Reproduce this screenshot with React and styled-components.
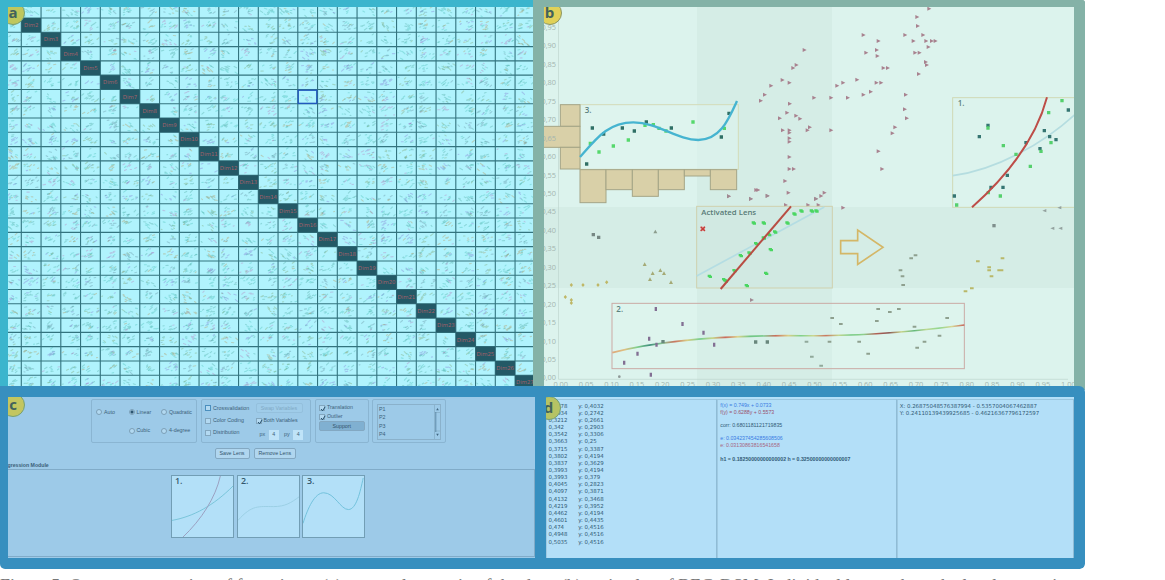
import React from "react";
import styled, { createGlobalStyle } from "styled-components";

const GlobalStyle = createGlobalStyle`
  * { box-sizing: border-box; }
  body { margin: 0; background: #fff; overflow: hidden; font-family: "Liberation Sans", Arial, sans-serif; }
`;

const Page = styled.div`
  width: 1165px;
  height: 580px;
  overflow: hidden;
`;
const Figure = styled.main`
  width: 1085px;
  display: grid;
  grid-template-columns: 533px 552px;
  grid-template-rows: 386px 183px;
  background: linear-gradient(#84b2a7 0 390px, #fff 390px);
  border-radius: 0 3px 5px 5px;
  overflow: hidden;
`;
const Panel = styled.section`
  background: ${(p) => p.$frame};
  padding: ${(p) => p.$pad};
`;
const View = styled.div`
  position: relative;
  height: 100%;
  overflow: hidden;
  background: ${(p) => p.$bg};
`;
const Chart = styled.svg`
  display: block;
  width: 100%;
  height: 100%;
`;
const Badge = styled.span`
  position: absolute;
  left: ${(p) => p.$x}px;
  top: ${(p) => p.$y}px;
  width: 24px;
  height: 24px;
  border-radius: 50%;
  border: 1px solid ${(p) => p.$edge || "#76a075"};
  background: ${(p) => p.$bg};
  color: #42625c;
  font: 700 15px/21px "Open Sans", sans-serif;
  text-align: center;
`;
const Bottom = styled.section`
  grid-column: 1 / -1;
  display: grid;
  grid-template-columns: 527px 528px;
  gap: 11px;
  padding: 11px 11px 11px 8px;
  background: #378fbf;
  border-radius: 0 6px 5px 2px;
`;

/* ---------- controls ---------- */
const Controls = styled.div`
  height: 100%;
  display: flex;
  flex-direction: column;
  padding-top: 1.5px;
  font-size: 5.3px;
  line-height: 7px;
  color: #3b5f78;
`;
const GroupRow = styled.div`
  display: flex;
  padding-left: 83px;
  height: 44px;
`;
const Group = styled.fieldset`
  margin: 0 ${(p) => p.$gap || 0}px 0 0;
  min-width: 0;
  width: ${(p) => p.$w}px;
  padding: ${(p) => p.$pad};
  border: 1px solid #8ab5d2;
  border-radius: 2px;
  display: ${(p) => (p.$cols ? "grid" : "block")};
  grid-template-columns: ${(p) => p.$cols};
  grid-auto-rows: ${(p) => p.$rows}px;
  align-items: center;
`;
const Option = styled.label`
  display: flex;
  align-items: center;
  gap: 2px;
  height: ${(p) => p.$h || 7}px;
  grid-column: ${(p) => p.$col || "auto"};
  white-space: nowrap;
`;
const Radio = styled.i`
  width: 6px;
  height: 6px;
  border-radius: 50%;
  border: 0.8px solid #7c9fb7;
  background: ${(p) => (p.$on ? "radial-gradient(#2b546f 0 1.2px, #a9d1eb 1.9px)" : "#b2d9f1")};
`;
const Check = styled.i`
  width: 6px;
  height: 6px;
  border: 1px solid ${(p) => (p.$focus ? "#4b8fbe" : "#83a7bf")};
  background: #b3d9f1;
  display: grid;
  place-items: center;
`;
const Tick = () => (
  <svg width="6" height="6" viewBox="0 0 6 6">
    <path d="M1 3L2.5 4.8L5.2 .8" fill="none" stroke="#244d69" strokeWidth="1" />
  </svg>
);
const Button = styled.button`
  width: ${(p) => p.$w}px;
  height: ${(p) => p.$h || 10.5}px;
  padding: 0;
  font: inherit;
  line-height: 8px;
  color: ${(p) => (p.disabled ? "#80a9c5" : "#32546c")};
  border: 1px solid ${(p) => (p.disabled ? "#94c0dd" : "#83a8c2")};
  border-radius: 2px;
  background: ${(p) => (p.$pressed ? "#80b0d1" : p.disabled ? "#9fcce9" : "#b0d6ef")};
`;
const AxisPick = styled.div`
  display: flex;
  align-items: center;
  gap: 5.5px;
  padding: 4px 0 0 4px;
`;
const Field = styled.b`
  width: 10px;
  height: 9.5px;
  font-weight: 400;
  text-align: center;
  line-height: 9px;
  background: #bfe3f8;
  margin-left: -2px;
`;
const ListBox = styled.div`
  width: 64px;
  height: 36px;
  border: 1px solid #8ab1cb;
  display: flex;
  justify-content: space-between;
  padding-left: 1.5px;
  line-height: 8.5px;
`;
const Scroll = styled.svg`
  width: 6px;
  height: 34px;
`;
const ButtonRow = styled.div`
  display: flex;
  gap: 4px;
  padding: 5.5px 0 0 206.5px;
  height: 20px;
`;
const ModuleTitle = styled.div`
  height: 6px;
  line-height: 5px;
  font-weight: 700;
  font-size: 5.2px;
  margin-left: -0.5px;
`;
const Models = styled.div`
  flex: 1;
  display: flex;
  gap: 2.4px;
  padding: 5.5px 0 0 163px;
  margin-bottom: 1px;
  border: 1px solid #80abc8;
  border-left: 0;
`;
const Thumb = styled.svg`
  width: 63.2px;
  height: 63.2px;
  background: #b3e0f8;
  border: 1px solid #729eb5;
  font: 600 9px "Open Sans", sans-serif;
`;

/* ---------- data readout ---------- */
const Readout = styled.div`
  display: grid;
  grid-template-columns: 170.5px 180px 1fr;
  height: 100%;
  padding-top: 2px;
`;
const Column = styled.div`
  padding: ${(p) => p.$pad};
  border-top: 1px solid #9ac6df;
  border-right: 1px solid #8fbcd6;
  box-shadow: inset 1px 0 #a0cae2;
  font: ${(p) => (p.$verdana ? '5.45px/7.16px "DejaVu Sans"' : '5.22px/6.7px "Liberation Sans"')}, sans-serif;
  color: #315a75;
`;
const Pair = styled.div`
  display: grid;
  grid-template-columns: 29.7px 1fr;
`;
const Line = styled.div`
  height: 6.7px;
  white-space: nowrap;
  color: ${(p) => p.$tone || "inherit"};
  font-weight: ${(p) => (p.$bold ? 700 : 400)};
`;
const Caption = styled.p`
  margin: 7px 0 0;
  font: 17.9px/20px "Liberation Serif", serif;
  color: #777;
  white-space: nowrap;
`;

/* ---------- scatterplot matrix ---------- */
const PX = 19.75, PY = 14.29, X0 = 21.3, Y0 = 18;
const INKS = ["#44bdb5", "#4ba79f", "#5f8b9c", "#7f78cf", "#b58f50", "#b87bbb", "#7aa06a"];

function matrixStrokes() {
  let s = 91;
  const rnd = () => ((s = (s * 16807) % 2147483647) / 2147483647);
  const paths = INKS.map(() => "");
  for (let r = -1; r < 26; r++) {
    for (let c = -1; c < 26; c++) {
      if (r === c) continue;
      const accent = Math.floor(rnd() * INKS.length);
      const cx = 0.3 + ((c * 7 + 30) % 5) * 0.11;
      const cy = 0.35 + ((r * 5 + 30) % 4) * 0.12;
      const n = (r === c + 1 ? 4 : 7) + Math.floor(rnd() * 7);
      const dir = rnd() < 0.75 ? -1 : 1;
      for (let i = 0; i < n; i++) {
        const k = rnd() < 0.45 ? accent : rnd() < 0.6 ? Math.floor(rnd() * 2) : Math.floor(rnd() * INKS.length);
        const u = rnd() < 0.55 ? cx + (rnd() - 0.5) * 0.45 : rnd();
        const v = rnd() < 0.55 ? cy + (rnd() - 0.5) * 0.5 : rnd();
        const x = X0 + (c + 0.06 + 0.8 * Math.min(1, Math.max(0, u))) * PX;
        const y = Y0 + (r + 0.16 + 0.72 * Math.min(1, Math.max(0, v))) * PY;
        const l = 0.8 + rnd() * 1.8;
        paths[k] += `M${x.toFixed(1)} ${y.toFixed(1)}l${l.toFixed(1)} ${(dir * l * rnd()).toFixed(1)}`;
      }
    }
  }
  return paths;
}
const STROKES = matrixStrokes();
const STEPS = Array.from({ length: 26 }, (_, i) => i);

const Matrix = () => (
  <Chart viewBox="8 7 525 379">
    {STROKES.map((d, i) => (
      <path key={i} d={d} stroke={INKS[i]} strokeWidth="1.1" strokeLinecap="round" opacity="0.36" fill="none" />
    ))}
    <g stroke="#33747f" strokeWidth="1.1">
      {STEPS.map((i) => (
        <path key={i} d={`M${X0 + i * PX} 7V386M8 ${Y0 + i * PY}H533`} />
      ))}
    </g>
    {STEPS.map((i) => (
      <g key={i}>
        <rect x={X0 + i * PX} y={Y0 + i * PY} width={PX} height={PY} fill="#235966" />
        <text x={X0 + (i + 0.5) * PX} y={Y0 + (i + 0.5) * PY + 2} textAnchor="middle" fontSize="5.4" fontFamily="DejaVu Sans" fill="#a0606a">
          {`Dim${i + 2}`}
        </text>
      </g>
    ))}
    <rect x="298.2" y="90.2" width="18.6" height="13.2" fill="none" stroke="#2158bd" strokeWidth="1.4" />
  </Chart>
);

/* ---------- regression plot: each Frame is a local grid, three units per pixel ---------- */
const Frame = ({ x, y, children }) => <g transform={`translate(${x} ${y}) scale(.33333)`}>{children}</g>;
const Marks = ({ pts, shape, fill }) => (
  <path fill={fill} d={pts.map(([x, y]) => `M${x} ${y}${shape}`).join("")} />
);
const RIGHT = "m-5 -6l12 6l-12 6z";
const LEFT = "m6 -5v10l-12 -5z";
const UP = "m-6 5l6 -11l6 11z";
const DOT = "m-5 -5h10v10h-10z";
const DASH = "m-6 -3h11v6h-11z";
const PILL = "m-4 -6h7v12h-7z";

const TRI_A = [[808,150],[784,195],[774,204],[742,240],[763,248],[708,257],[689,284],[677,302],[837,293],[764,311],[756,338],[783,347],[795,356],[734,355],[743,391],[763,391],[763,398],[824,382],[817,391],[763,415],[763,425],[763,471],[763,507],[776,507],[750,543],[760,578],[663,570],[669,570],[697,588],[647,597],[581,589],[752,615],[819,615]];
const TRI_B = [[357,26],[321,51],[323,78],[160,105],[285,105],[339,105],[205,123],[310,123],[348,123],[365,123],[376,123],[355,141],[200,150],[168,158],[202,168],[315,158],[328,158],[347,186],[350,195],[220,204],[233,204],[326,222],[141,239],[99,248],[81,257],[199,248],[213,248],[182,275],[160,284],[287,284],[63,293],[113,293],[284,328],[290,355],[255,382],[247,400],[63,391],[205,454],[216,507],[43,578],[33,588],[17,597],[25,615],[99,623]];
const BARS = [[76,314,59,65],[24,379,111,63],[76,442,59,65],[135,509,78,99],[213,509,79,60],[292,509,78,80],[370,509,78,60],[448,509,78,19],[526,509,79,60]];
const TREND = ["#dda77b","#dfbf80","#7fcf8c","#3f8f7c","#8cc796","#c97560","#d9ce85","#76cf90","#c8d58a","#c96a5e","#ddd48c","#70c684","#7fcc90","#c96e5c","#dccf87","#7ed18b","#cbd78f","#c9765f","#c4d68e","#77cb84","#8fd08d","#b36156","#8a5450","#c9d58c","#60b779","#bfd993","#8fd68e","#d8d794","#c66358"];

const Regression = () => (
  <Chart viewBox="544 7 530 379" fontFamily="Open Sans, sans-serif">
    <defs>
      <linearGradient id="trend" gradientUnits="userSpaceOnUse" x1="231" y1="0" x2="1288" y2="0">
        {TREND.map((c, i) => (
          <stop key={i} offset={i / (TREND.length - 1)} stopColor={c} />
        ))}
      </linearGradient>
    </defs>
    <path d="M697 7H832V386H697zM544 207H1074V288H544z" fill="#b8d7cf" opacity="0.2" />
    <path d="M558.5 20V379.3H1068" fill="none" stroke="#bfd5cf" strokeWidth="0.7" />
    <Frame x={535} y={0}>
      <rect x="135" y="314" width="475" height="194" fill="#dff6f0" fillOpacity=".5" stroke="#d3dcb9" strokeWidth="3" />
      {BARS.map(([x, y, w, h]) => (
        <rect key={`${x}-${y}`} x={x} y={y} width={w} height={h} fill="#d9d0a8" stroke="#a5a586" strokeWidth="3" />
      ))}
      <Marks pts={TRI_A} shape={RIGHT} fill="#a8828f" />
      <Marks pts={[[172,384],[206,402],[262,384],[298,393],[334,366],[409,384],[559,411],[582,340],[155,492]]} shape={DOT} fill="#2f6f65" />
      <Marks pts={[[166,430],[192,456],[235,438],[280,420],[330,376],[355,374],[372,385],[393,393],[474,366],[568,385]]} shape={DOT} fill="#55d86c" />
      <path d="M135 471C185 414 220 367 295 367S425 420 490 420C555 420 580 360 606 303" fill="none" stroke="#46b4d0" strokeWidth="7" />
      <text x="149" y="339" fontSize="24" fontWeight="600" fill="#5c817d">3.</text>
    </Frame>
    <Frame x={810} y={0}>
      <Marks pts={TRI_B} shape={RIGHT} fill="#a8828f" />
      <rect x="428" y="293" width="366" height="329" fill="none" stroke="#d0d9b5" strokeWidth="3" />
      <path d="M428 527C560 510 700 430 794 344" fill="none" stroke="#b5dde0" strokeWidth="5" />
      <Marks pts={[[534,376],[508,410],[775,330],[703,392],[719,410],[738,419],[690,446],[648,428],[592,526],[543,562],[579,562],[433,588]]} shape={DOT} fill="#357572" />
      <Marks pts={[[534,384],[580,437],[618,463],[661,499],[693,454],[723,428],[716,338],[756,302],[571,588],[535,578],[440,615]]} shape={DOT} fill="#55d06d" />
      <path d="M486 622C600 520 680 410 711 292" fill="none" stroke="#bd4d48" strokeWidth="6" />
      <text x="443" y="319" fontSize="24" fontWeight="600" fill="#5c817d">1.</text>
    </Frame>
    <Frame x={535} y={195}>
      <rect x="485" y="34" width="407" height="245" fill="#bdd8d0" fillOpacity=".15" stroke="#cfd1ae" strokeWidth="3" />
      <path d="M485 243L868 36" stroke="#b4dde3" strokeWidth="5" />
      <Marks pts={[[656,84],[686,84],[757,84],[720,111],[702,119],[686,129],[663,146],[643,174],[617,182],[707,164],[693,235],[635,272],[524,244],[567,254],[598,227],[778,57],[799,48],[830,48],[844,48],[572,258]]} shape="m-6 -5h10v3h3v7h-10v-3h-3z" fill="#4ad661" />
      <path d="M557 282L768 34" stroke="#b84d43" strokeWidth="6" />
      <path d="M497 95h13v13h-13z" fill="#f0a19b" />
      <path d="M497 95l13 13m0 -13l-13 13" stroke="#bf3f3c" strokeWidth="4" />
      <text x="499" y="61" fontSize="23.4" fontWeight="600" fill="#587b77">Activated Lens</text>
      <Marks pts={[[581,4],[647,11],[697,2],[650,315],[843,11]]} shape={RIGHT} fill="#a08a93" />
      <Marks pts={[[175,119],[191,127]]} shape={DOT} fill="#768783" />
      <Marks pts={[[361,110]]} shape={UP} fill="#8c9d8d" />
      <Marks pts={[[329,208],[353,235],[345,253],[376,226],[387,235],[408,262]]} shape={UP} fill="#a5aa76" />
      <Marks pts={[[109,270],[144,270],[189,270],[215,262],[91,306],[109,315],[109,324]]} shape="m0 -6l5 6l-5 6l-5 -6z" fill="#bfb766" />
      <rect x="231" y="325" width="1057" height="196" fill="#e0f6f1" fillOpacity=".25" stroke="#cbaaa5" strokeWidth="3" />
      <path d="M232 473C400 430 600 423 750 422C950 424 1100 415 1288 390" fill="none" stroke="url(#trend)" strokeWidth="5" />
      <Marks pts={[[363,342],[443,387],[506,413],[538,449],[343,431],[365,449],[308,476],[268,503],[348,539]]} shape={PILL} fill="#826f93" />
      <Marks pts={[[384,440],[662,441],[697,441]]} shape={DOT} fill="#69877c" />
      <Marks pts={[[815,440],[831,485],[859,512]]} shape={DASH} fill="#91a99b" />
      <circle cx="253" cy="545" r="4" fill="#8f9998" />
      <text x="244" y="352" fontSize="24" fontWeight="600" fill="#5c817d">2.</text>
    </Frame>
    <Frame x={810} y={195}>
      <path d="M92 137H143V105L219 157L143 208V176H92z" fill="none" stroke="#d4b767" strokeWidth="5" />
      <Marks pts={[[205,342],[240,351],[267,342],[67,369],[93,387],[201,378],[412,369],[314,395],[389,422],[344,440],[322,458],[59,440],[148,440],[175,476],[304,190],[317,181],[272,226],[278,244],[280,270]]} shape={DASH} fill="#8ea08f" />
      <Marks pts={[[504,199],[578,190],[538,217],[538,226],[568,226],[575,226],[545,244],[486,280],[467,289]]} shape={DASH} fill="#b9b869" />
      <Marks pts={[[703,47],[748,38],[727,100],[751,100]]} shape={LEFT} fill="#94a29f" />
      <Marks pts={[[552,92]]} shape={DOT} fill="#7f8f8c" />
    </Frame>
    <g fill="#a3b5af" fontSize="7.4">
      {Array.from({ length: 20 }, (_, i) => (
        <text key={i} x="556" y={380.4 - i * 18.44} textAnchor="end">{(i * 0.05).toFixed(2).replace(".", ",")}</text>
      ))}
      {Array.from({ length: 21 }, (_, i) => (
        <text key={i} x={560.7 + i * 25.38} y="387.3" textAnchor="middle">{(i * 0.05).toFixed(2)}</text>
      ))}
    </g>
  </Chart>
);

const POINTS = [
  ["0,2778","0,4032"],["0,2934","0,2742"],["0,3212","0,2661"],["0,342","0,2903"],["0,3542","0,3306"],
  ["0,3663","0,25"],["0,3715","0,3387"],["0,3802","0,4194"],["0,3837","0,3629"],["0,3993","0,4194"],
  ["0,3993","0,379"],["0,4045","0,2823"],["0,4097","0,3871"],["0,4132","0,3468"],["0,4219","0,3952"],
  ["0,4462","0,4194"],["0,4601","0,4435"],["0,474","0,4516"],["0,4948","0,4516"],["0,5035","0,4516"],
];

const ControlPanel = () => (
  <Controls>
    <GroupRow>
      <Group $w={106} $gap={4} $pad="3.5px 0 0 4px" $cols="32.5px 32.5px 1fr" $rows={18.5}>
        <Option><Radio />Auto</Option>
        <Option><Radio $on />Linear</Option>
        <Option><Radio />Quadratic</Option>
        <Option $col="2"><Radio />Cubic</Option>
        <Option><Radio />4-degree</Option>
      </Group>
      <Group $w={109.5} $gap={4} $pad="2.5px 0 0 3px" $cols="50.5px 1fr" $rows={12.4}>
        <Option><Check $focus />Crossvalidation</Option>
        <Button $w={47} disabled>Swap Variables</Button>
        <Option><Check />Color Coding</Option>
        <Option><Check><Tick /></Check>Both Variables</Option>
        <Option><Check />Distribution</Option>
        <AxisPick>px<Field>4</Field>py<Field>4</Field></AxisPick>
      </Group>
      <Group $w={54} $gap={3} $pad="3.5px 0 0 3.5px">
        <Option $h={9.2}><Check><Tick /></Check>Translation</Option>
        <Option $h={9.2}><Check><Tick /></Check>Outlier</Option>
        <Button $w={45.5} $h={9.5} $pressed>Support</Button>
      </Group>
      <Group $w={74.5} $pad="4px 0 0 4px">
        <ListBox>
          <div>{["P1", "P2", "P3", "P4"].map((p) => <div key={p}>{p}</div>)}</div>
          <Scroll viewBox="0 0 6 34">
            <path d="M.5 0V34M.5 7.5H6M.5 26H6" stroke="#85aec8" strokeWidth=".8" />
            <path d="M1.8 7V27" stroke="#5e8ba8" />
            <path d="M3.5 3l1.3 2.3h-2.6zM3.5 31l1.3 -2.3h-2.6z" fill="#3f6580" />
          </Scroll>
        </ListBox>
      </Group>
    </GroupRow>
    <ButtonRow>
      <Button $w={35}>Save Lens</Button>
      <Button $w={42.5}>Remove Lens</Button>
    </ButtonRow>
    <ModuleTitle>gression Module</ModuleTitle>
    <Models>
      <Thumb viewBox="0 0 62 62">
        <path d="M0 45C22 41 42 30 62 10" fill="none" stroke="#79c4d9" />
        <path d="M11 62C30 44 44 22 49 0" fill="none" stroke="#9a9fc0" />
        <text x="3" y="8.5" fill="#34576c">1.</text>
      </Thumb>
      <Thumb viewBox="0 0 62 62">
        <path d="M0 45C14 29 21 31 36 31C48 31 54 27 62 21" fill="none" stroke="#9bcfe5" />
        <text x="3" y="8.5" fill="#34576c">2.</text>
      </Thumb>
      <Thumb viewBox="0 0 62 62">
        <path d="M0 48C5 32 12 17 21 17C32 17 38 34 46 34C54 34 58 16 61 2" fill="none" stroke="#72c1db" />
        <text x="4" y="8.5" fill="#34576c">3.</text>
      </Thumb>
    </Models>
  </Controls>
);

export default function App() {
  return (
    <Page>
      <GlobalStyle />
      <Figure>
        <Panel $frame="#3bb5cd" $pad="7px 0 0 8px">
          <View $bg="#b0f3fd">
            <Matrix />
            <Badge $x={-7} $y={-6} $bg="#bfc75d">a</Badge>
          </View>
        </Panel>
        <Panel $frame="#84b2a7" $pad="7px 11px 0 11px">
          <View $bg="#dcf3ed">
            <Regression />
            <Badge $x={-6.5} $y={-6} $bg="#e0d158" $edge="#8b9565">b</Badge>
          </View>
        </Panel>
        <Bottom>
          <View $bg="#9dcae8">
            <ControlPanel />
            <Badge $x={-7} $y={-4} $bg="#c3c660">c</Badge>
          </View>
          <View $bg="#b3dff8">
            <Readout>
              <Column $verdana $pad="2.6px 0 0 2.5px">
                {POINTS.map(([x, y], i) => <Pair key={i}><span>{x}</span><span>y: {y}</span></Pair>)}
              </Column>
              <Column $pad="2px 0 0 3.8px">
                <Line $tone="#397be3">f(x) = 0.749x + 0.0733</Line>
                <Line $tone="#99516f">f(y) = 0.6288y + 0.5573</Line>
                <Line />
                <Line>corr: 0.6801181121719835</Line>
                <Line />
                <Line $tone="#397be3">e: 0.034237454285608506</Line>
                <Line $tone="#a66581">e: 0.03130863816541658</Line>
                <Line />
                <Line $bold>h1 = 0.18250000000000002 h = 0.32500000000000007</Line>
              </Column>
              <Column $verdana $pad="2.6px 0 0 3.2px">
                <div>X: 0.26875048576387994 - 0.5357004067462887</div>
                <div>Y: 0.24110139439925685 - 0.46216367796172597</div>
              </Column>
            </Readout>
            <Badge $x={-9.5} $y={-1} $bg="#b6c364">d</Badge>
          </View>
        </Bottom>
      </Figure>
      <Caption>Figure 5: Our system consists of four views: (a) scatterplot matrix of the data, (b) main plot of BEG-DSM. Individual lenses show the local regression</Caption>
    </Page>
  );
}
